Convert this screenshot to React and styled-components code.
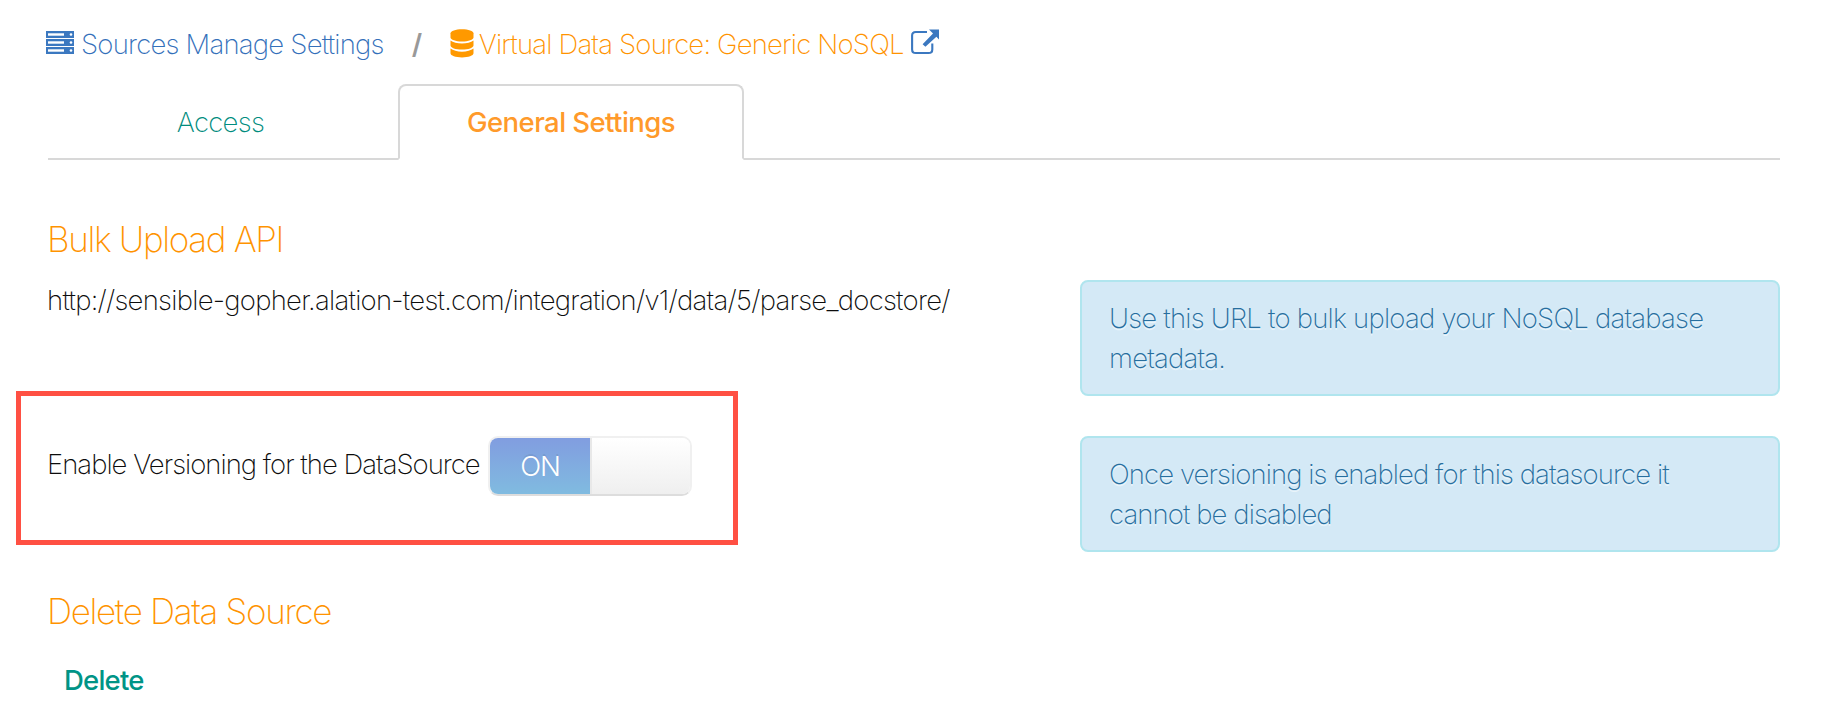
import React from 'react';
import styled, { createGlobalStyle } from 'styled-components';

const color = {
  blue: '#3470ba',
  orange: '#ff9300',
  teal: '#008c7e',
  line: '#d8d8d8',
  text: '#0c0c0c',
};

const GlobalStyle = createGlobalStyle`
  * { box-sizing: border-box; }
  body {
    margin: 0;
    background: #ffffff;
    color: ${color.text};
    font-family: Inter, 'Liberation Sans', sans-serif;
    font-size: 27.5px;
    font-weight: 250;
    line-height: 40px;
  }
`;

const Page = styled.main`
  padding: 24px 42px 0 48px;
`;

const Breadcrumbs = styled.nav`
  display: flex;
  align-items: flex-start;
  height: 40px;
  margin-left: -2px;
  white-space: nowrap;
`;

const Crumb = styled.a`
  display: flex;
  align-items: flex-start;
  gap: ${(p) => p.$gap}px;
  color: ${(p) => p.$color};
  letter-spacing: ${(p) => p.$tracking}px;
  text-decoration: none;
`;

const CrumbSeparator = styled.span`
  width: 66px;
  padding-left: 28px;
  color: #999999;
  font-weight: 600;
`;

const Icon = styled.svg`
  display: block;
  flex: none;
  margin-top: ${(p) => p.$top}px;
  color: ${(p) => p.$color};
`;

const ExternalLink = styled.a`
  margin-left: 7px;
`;

const Tabs = styled.div`
  display: flex;
  height: 76px;
  margin-top: 20px;
`;

const Tab = styled.a`
  width: ${(p) => p.$width}px;
  padding-top: 16px;
  padding-right: ${(p) => (p.$active ? 0 : 5)}px;
  text-align: center;
  text-decoration: none;
  color: ${(p) => (p.$active ? '#ff9a2b' : color.teal)};
  font-weight: ${(p) => (p.$active ? 500 : 250)};
  letter-spacing: ${(p) => (p.$active ? -0.56 : -0.7)}px;
  border: 2px solid ${(p) => (p.$active ? color.line : 'transparent')};
  border-bottom-color: ${(p) => (p.$active ? 'transparent' : color.line)};
  border-radius: ${(p) => (p.$active ? '8px 8px 0 0' : 0)};
  border-left-width: ${(p) => (p.$active ? 2 : 0)}px;
  border-right-width: ${(p) => (p.$active ? 2 : 0)}px;
`;

const TabsRest = styled.div`
  flex: 1;
  border-bottom: 2px solid ${color.line};
`;

const Heading = styled.h2`
  margin: ${(p) => p.$top}px 0 0 -1px;
  color: ${color.orange};
  font-size: 35px;
  font-weight: 250;
  line-height: 48px;
  letter-spacing: -1.34px;
`;

const SettingRow = styled.section`
  display: grid;
  grid-template-columns: 1fr 700px;
  align-items: start;
  height: 116px;
  margin-top: ${(p) => p.$top}px;
`;

const Url = styled.div`
  margin-left: -1px;
  letter-spacing: -0.74px;
  white-space: nowrap;
`;

const Info = styled.aside`
  height: 116px;
  padding: 16px 60px 16px 27px;
  color: #276e9e;
  background: #d4e9f6;
  border: 2px solid #b0e5ee;
  border-radius: 8px;
  letter-spacing: ${(p) => p.$tracking}px;
  text-shadow: 0 2px 0 rgba(255, 255, 255, 0.5);
`;

const VersioningField = styled.div`
  position: relative;
  display: flex;
  align-items: center;
  height: 60px;
`;

const FieldLabel = styled.label`
  width: 441px;
  margin-left: -1px;
  padding-bottom: 4px;
  letter-spacing: -0.99px;
  white-space: nowrap;
`;

const Toggle = styled.button`
  display: flex;
  width: 204px;
  height: 60px;
  padding: 0;
  overflow: hidden;
  font: inherit;
  background: #ffffff;
  border: 2px solid #f0f0f0;
  border-bottom-color: #dddddd;
  border-radius: 10px;
`;

const ToggleOn = styled.span`
  width: 100px;
  padding-top: 8px;
  color: #ffffff;
  font-weight: 300;
  letter-spacing: -1px;
  text-align: center;
  text-shadow: 0 -2px 0 rgba(0, 0, 0, 0.08);
  background: linear-gradient(#819de0, #80bbe0);
`;

const ToggleKnob = styled.span`
  flex: 1;
  background: linear-gradient(#ffffff, #efefef);
  border-left: 2px solid #e8e8e8;
`;

const Highlight = styled.div`
  position: absolute;
  top: -45px;
  left: -32px;
  width: 722px;
  height: 154px;
  border: 5px solid #ff5043;
  pointer-events: none;
`;

const DeleteLink = styled.a`
  display: block;
  margin-top: 25px;
  padding-left: 16px;
  color: #009486;
  font-weight: 500;
  letter-spacing: -0.8px;
`;

function ServerIcon() {
  return (
    <Icon $top={7} $color="#3b78c0" width="28" height="23" viewBox="0 0 28 23" fill="none">
      {[0, 8, 16].map((y) => (
        <g key={y}>
          <rect y={y} width="28" height="7" fill="currentColor" />
          <rect x="2" y={y + 2.3} width="16" height="2.4" fill="#fff" />
          <circle cx="25" cy={y + 3.5} r="1.3" fill="#fff" />
        </g>
      ))}
    </Icon>
  );
}

function DatabaseIcon() {
  return (
    <Icon $top={5} $color="#ff9900" width="24" height="29" viewBox="0 0 24 29" fill="currentColor">
      <path d="M.5 4.3C.5 2 5.6.3 12 .3S23.5 2 23.5 4.3V8.5C23.5 10.8 18.4 12.5 12 12.5S.5 10.8 .5 8.5Z" />
      <path d="M.5 11.6C3 13.6 7.2 14.6 12 14.6S21 13.6 23.5 11.6V16.5C23.5 18.8 18.4 20.6 12 20.6S.5 18.8 .5 16.5Z" />
      <path d="M.5 19.6C3 21.7 7.2 22.7 12 22.7S21 21.7 23.5 19.6V24.3C23.5 26.6 18.4 28.5 12 28.5S.5 26.6 .5 24.3Z" />
    </Icon>
  );
}

function ExternalIcon() {
  return (
    <Icon $top={5} $color="#3b78c0" width="28" height="26" viewBox="0 0 28 26" fill="none">
      <path
        d="M16 3H4.8Q1.1 3 1.1 6.6V20.4Q1.1 24 4.8 24H17.5Q21.3 24 21.3 20.4V14.5"
        stroke="currentColor"
        strokeWidth="2.1"
      />
      <path d="M18 .5H28V10.4L25.4 7.8L14.4 17.8L11.6 15.2L22 4.5Z" fill="currentColor" />
    </Icon>
  );
}

export default function App() {
  return (
    <Page>
      <GlobalStyle />
      <Breadcrumbs>
        <Crumb $color={color.blue} $gap={7} $tracking={-0.78}>
          <ServerIcon />
          <span>Sources Manage Settings</span>
        </Crumb>
        <CrumbSeparator>/</CrumbSeparator>
        <Crumb $color={color.orange} $gap={5} $tracking={-0.81}>
          <DatabaseIcon />
          <span>Virtual Data Source: Generic NoSQL</span>
        </Crumb>
        <ExternalLink>
          <ExternalIcon />
        </ExternalLink>
      </Breadcrumbs>

      <Tabs>
        <Tab $width={350}>Access</Tab>
        <Tab $width={346} $active>General Settings</Tab>
        <TabsRest />
      </Tabs>

      <Heading $top={55}>Bulk Upload API</Heading>
      <SettingRow $top={17}>
        <Url>http://sensible-gopher.alation-test.com/integration/v1/data/5/parse_docstore/</Url>
        <Info $tracking={-0.78}>Use this URL to bulk upload your NoSQL database metadata.</Info>
      </SettingRow>

      <SettingRow $top={40}>
        <VersioningField>
          <FieldLabel>Enable Versioning for the DataSource</FieldLabel>
          <Toggle>
            <ToggleOn>ON</ToggleOn>
            <ToggleKnob />
          </Toggle>
          <Highlight />
        </VersioningField>
        <Info $tracking={-0.91}>Once versioning is enabled for this datasource it cannot be disabled</Info>
      </SettingRow>

      <Heading $top={35}>Delete Data Source</Heading>
      <DeleteLink>Delete</DeleteLink>
    </Page>
  );
}
